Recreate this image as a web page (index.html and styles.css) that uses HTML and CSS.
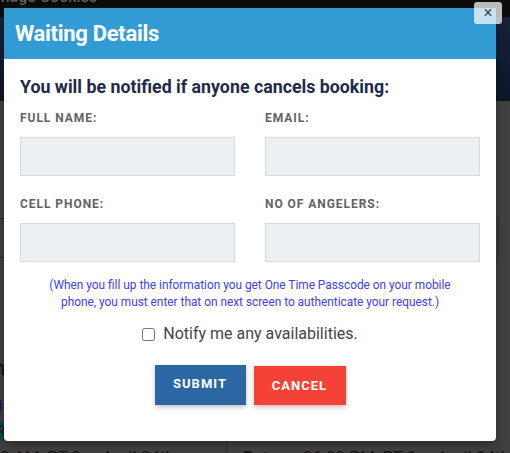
FILE: index.html
```html
<!DOCTYPE html>
<html lang="en">
<head>
<meta charset="utf-8">
<title>Waiting Details</title>
<link rel="stylesheet" href="styles.css">
</head>
<body>
<div class="page">
  <div class="topbar"><span class="cookies">Manage Cookies</span></div>
  <div class="hero"></div>
  <div class="search-row"><div class="search-box"></div></div>
  <div class="trip">
    <div class="trip-title">Salmon</div>
    <div class="trip-link">4 hours</div>
    <div class="trip-badge">R</div>
  </div>
  <div class="times">
    <span class="time-left">0 AM, PT ? ... April 24th</span>
    <span class="time-right"><b>Return:</b> 06:00 PM, PT ? ... April 24th</span>
  </div>
</div>

<div class="modal">
  <div class="modal-header"><h2 class="modal-title">Waiting Details</h2></div>
  <div class="modal-body">
    <h3 class="notice">You will be notified if anyone cancels booking:</h3>
    <div class="form-grid">
      <div class="field"><label class="field-label">FULL NAME:</label><input class="field-input" type="text"></div>
      <div class="field"><label class="field-label">EMAIL:</label><input class="field-input" type="text"></div>
      <div class="field"><label class="field-label">CELL PHONE:</label><input class="field-input" type="text"></div>
      <div class="field"><label class="field-label">NO OF ANGELERS:</label><input class="field-input" type="text"></div>
    </div>
    <p class="otp-note">(When you fill up the information you get One Time Passcode on your mobile phone, you must enter that on next screen to authenticate your request.)</p>
    <label class="notify"><input type="checkbox" class="notify-box"><span>Notify me any availabilities.</span></label>
    <div class="actions">
      <button class="btn btn-submit" type="button">SUBMIT</button>
      <button class="btn btn-cancel" type="button">CANCEL</button>
    </div>
  </div>
</div>
<button class="close-btn" type="button">×</button>
</body>
</html>
```

FILE: styles.css
```css
html, body {
  margin: 0;
  padding: 0;
}
body {
  width: 510px;
  height: 453px;
  overflow: hidden;
  position: relative;
  background: #404040;
  font-family: Roboto, "Liberation Sans", sans-serif;
}

/* dimmed page underneath */
.page {
  display: flex;
  flex-direction: column;
}
.topbar {
  height: 17px;
  background: #0c0c0c;
  overflow: hidden;
}
.cookies {
  display: block;
  margin: -12px 0 0 -22px;
  font-size: 16px;
  line-height: 18px;
  color: #6a6a6a;
  white-space: nowrap;
}
.hero {
  height: 84px;
  background: linear-gradient(180deg, #17233a 0%, #101b30 60%, #0d1627 100%);
}
.search-row {
  margin-top: 117px;
  height: 40px;
}
.search-box {
  margin-left: -10px;
  width: 507px;
  height: 38px;
  border: 1px solid #2a2a2a;
  border-radius: 4px;
}
.trip {
  height: 183px;
  display: flex;
  flex-direction: column;
  padding-top: 100px;
  box-sizing: border-box;
}
.trip-title {
  margin-left: -40px;
  font-size: 20px;
  line-height: 20px;
  font-weight: 700;
  color: #2a1016;
}
.trip-link {
  margin-top: 20px;
  margin-left: -5px;
  font-size: 14px;
  line-height: 16px;
  color: #101a6a;
}
.trip-badge {
  margin-top: 8px;
  width: 30px;
  height: 18px;
  background: #0f4a4a;
  color: #1a1a1a;
  font-size: 15px;
  line-height: 18px;
  text-indent: -4px;
}
.times {
  display: flex;
  height: 12px;
  font-size: 17px;
  line-height: 20px;
  color: #161616;
  white-space: nowrap;
}
.time-left {
  width: 233px;
  padding-top: 4px;
  border-right: 1px solid #2c2c2c;
  margin-top: 2px;
}
.time-right {
  padding-left: 16px;
  padding-top: 6px;
}

/* modal */
.modal {
  position: absolute;
  left: 4px;
  top: 8px;
  width: 492px;
  height: 433px;
  background: #ffffff;
  border-radius: 0 0 4px 4px;
  overflow: hidden;
  box-shadow: 0 3px 10px rgba(0, 0, 0, 0.35);
}
.modal-header {
  height: 51px;
  background: #339bd3;
  display: flex;
  align-items: center;
  padding: 0 11px;
}
.modal-title {
  margin: 0;
  font-size: 22px;
  font-weight: 700;
  letter-spacing: -0.3px;
  color: #ffffff;
  line-height: 26px;
}
.modal-body {
  padding: 17px 16px 0 16px;
}
.notice {
  margin: 0;
  font-size: 17.8px;
  line-height: 22px;
  font-weight: 700;
  color: #1e2b4a;
}
.form-grid {
  margin-top: 12px;
  display: grid;
  grid-template-columns: 215px 215px;
  column-gap: 30px;
  row-gap: 20px;
}
.field {
  display: flex;
  flex-direction: column;
  gap: 11px;
}
.field-label {
  font-size: 12px;
  line-height: 16px;
  font-weight: 700;
  letter-spacing: 0.95px;
  color: #5f6368;
}
.field-input {
  box-sizing: border-box;
  height: 39px;
  width: 215px;
  margin: 0;
  padding: 0 10px;
  border: 1px solid #d6dadd;
  background: #ecf0f3;
  border-radius: 0;
  outline: none;
}
.otp-note {
  width: 420px;
  margin: 15px auto 0;
  text-align: center;
  font-size: 11.85px;
  line-height: 17px;
  color: #4040ff;
}
.notify {
  display: flex;
  justify-content: center;
  align-items: center;
  margin-top: 13px;
  font-size: 16px;
  line-height: 20px;
  color: #454545;
}
.notify-box {
  width: 13px;
  height: 13px;
  margin: 0 8px 0 0;
}
.actions {
  margin-top: 21px;
  display: flex;
  justify-content: center;
  align-items: flex-end;
  gap: 8px;
}
.btn {
  border: none;
  margin: 0;
  padding: 0;
  font-family: Roboto, "Liberation Sans", sans-serif;
  font-size: 13px;
  font-weight: 700;
  letter-spacing: 1px;
  color: #ffffff;
  box-shadow: 0 2px 5px rgba(0, 0, 0, 0.25);
}
.btn-submit {
  width: 91px;
  height: 40px;
  padding-bottom: 3px;
  background: #2b68a3;
}
.btn-cancel {
  width: 92px;
  height: 39px;
  background: #f44336;
}
.close-btn {
  position: absolute;
  left: 474px;
  top: 2px;
  width: 28px;
  height: 22px;
  padding: 0;
  border: none;
  border-radius: 3px;
  background: rgba(255, 255, 255, 0.72);
  color: #4a4a4a;
  font-family: Roboto, "Liberation Sans", sans-serif;
  font-size: 16px;
  line-height: 22px;
}
```
